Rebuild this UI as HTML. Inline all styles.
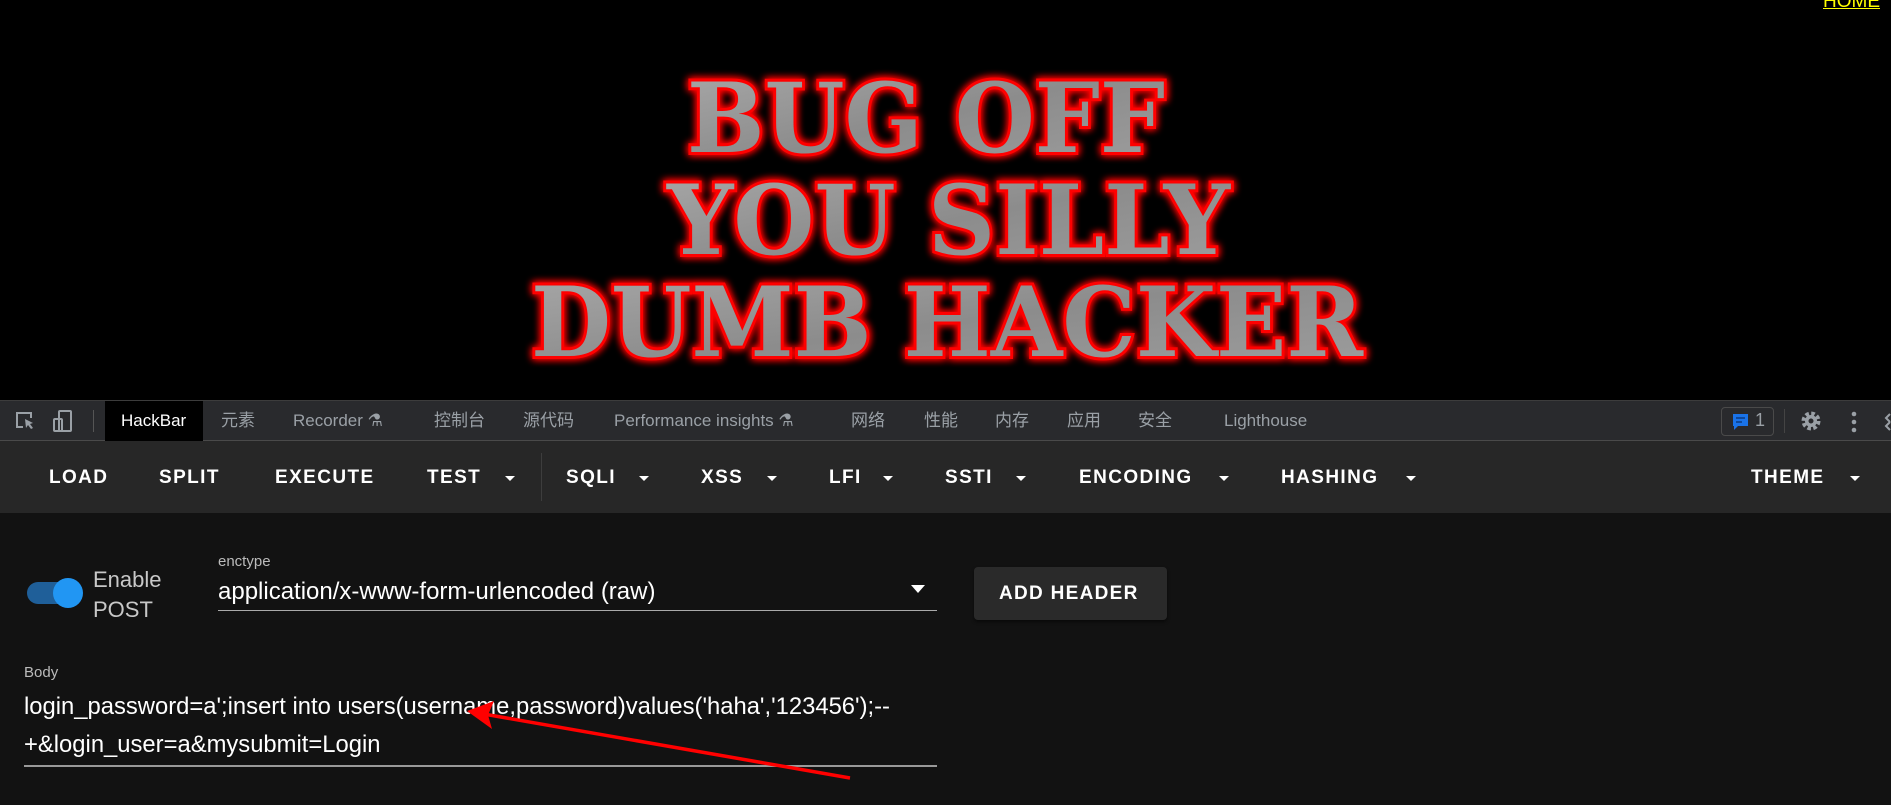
<!DOCTYPE html>
<html><head><meta charset="utf-8">
<style>
*{margin:0;padding:0;box-sizing:border-box}
body{width:1891px;height:805px;background:#000;position:relative;overflow:hidden;font-family:"Liberation Sans","Noto Sans CJK SC",sans-serif}
.abs{position:absolute;white-space:nowrap}
#home{left:1823px;top:-9px;font-size:19px;color:#ff0;text-decoration:underline}
#tabs{position:absolute;left:0;top:400px;width:1891px;height:41px;background:#292a2d;border-top:1px solid #3c3c3c;border-bottom:1px solid #4a4a4a}
#tabs .t{position:absolute;top:10px;font-size:17px;line-height:20px;height:20px;color:#9aa0a6}
#tools{}
#tool{position:absolute;left:0;top:441px;width:1891px;height:72px;background:#272727}
#tool .b{position:absolute;top:26px;font-size:19px;font-weight:bold;color:#fff;letter-spacing:1.4px}
.ar{position:absolute;top:35px;width:0;height:0;border-left:5px solid transparent;border-right:5px solid transparent;border-top:5px solid #fff}
#panel{position:absolute;left:0;top:513px;width:1891px;height:292px;background:#121212}
</style></head><body>
<a id="home" class="abs">HOME</a>
<svg class="abs" style="left:0;top:0" width="1891" height="400">
<defs>
<filter id="g" x="-10%" y="-30%" width="120%" height="160%"><feGaussianBlur stdDeviation="4" in="SourceAlpha" result="b"/><feFlood flood-color="#ff0000"/><feComposite in2="b" operator="in" result="r"/><feMerge><feMergeNode in="r"/><feMergeNode in="r"/><feMergeNode in="SourceGraphic"/></feMerge></filter>
<linearGradient id="m" x1="0" y1="0" x2="1" y2="1"><stop offset="0" stop-color="#a8a8a8"/><stop offset=".5" stop-color="#8c8c8c"/><stop offset="1" stop-color="#9e9e9e"/></linearGradient>
</defs>
<g font-family="DejaVu Serif,serif" font-weight="bold" font-size="96" fill="url(#m)" stroke="#f00" stroke-width="6" paint-order="stroke" filter="url(#g)">
<text x="687" y="152" textLength="478" lengthAdjust="spacingAndGlyphs">BUG OFF</text>
<text x="667" y="254" textLength="563" lengthAdjust="spacingAndGlyphs">YOU SILLY</text>
<text x="531" y="356" textLength="832" lengthAdjust="spacingAndGlyphs">DUMB HACKER</text>
</g>
</svg>
<div id="tabs">
<svg class="abs" style="left:14px;top:9px" width="70" height="24" fill="none" stroke="#9aa0a6" stroke-width="2">
<path d="M9 17H3V3h14v5"/><path d="M11 9l8 4-3 1 3 4-2 1-3-4-2 3z" fill="#9aa0a6" stroke="none"/>
<rect x="45" y="1" width="12" height="20" rx="1"/><rect x="40" y="9" width="8" height="12" rx="1"/>
</svg>
<div class="abs" style="left:93px;top:9px;width:1px;height:22px;background:#555"></div>
<div class="abs" style="left:105px;top:0;width:98px;height:40px;background:#000"></div>
<span class="t" style="left:121px;color:#fff">HackBar</span>
<span class="t" style="left:221px">元素</span>
<span class="t" style="left:293px">Recorder ⚗</span>
<span class="t" style="left:434px">控制台</span>
<span class="t" style="left:523px">源代码</span>
<span class="t" style="left:614px">Performance insights ⚗</span>
<span class="t" style="left:851px">网络</span>
<span class="t" style="left:924px">性能</span>
<span class="t" style="left:995px">内存</span>
<span class="t" style="left:1067px">应用</span>
<span class="t" style="left:1138px">安全</span>
<span class="t" style="left:1224px">Lighthouse</span>
<div class="abs" style="left:1721px;top:6px;width:53px;height:29px;border:1px solid #4a4a4a;border-radius:4px"></div>
<svg class="abs" style="left:1732px;top:12px" width="18" height="18"><path d="M1 1h15v12H6l-4 4V13H1z" fill="#1a73e8"/><path d="M4 5h9M4 9h6" stroke="#0b3a80" stroke-width="1.5"/></svg>
<span class="t" style="left:1755px;top:9px;font-size:18px">1</span>
<div class="abs" style="left:1784px;top:8px;width:1px;height:24px;background:#444"></div>
<svg class="abs" style="left:1800px;top:9px" width="22" height="22"><circle cx="11" cy="11" r="7" fill="none" stroke="#9aa0a6" stroke-width="5" stroke-dasharray="3.3 2.2"/><circle cx="11" cy="11" r="6" fill="#9aa0a6"/><circle cx="11" cy="11" r="2.5" fill="#292a2d"/></svg>
<svg class="abs" style="left:1850px;top:9px" width="10" height="24" fill="#9aa0a6"><circle cx="4" cy="4" r="2.3"/><circle cx="4" cy="12" r="2.3"/><circle cx="4" cy="20" r="2.3"/></svg>
<svg class="abs" style="left:1884px;top:11px" width="7" height="20" fill="none" stroke="#9aa0a6" stroke-width="2"><path d="M6 2l-4 4 4 4M6 10l-4 4 4 4"/></svg>
</div>
<div id="tool">
<span class="b" style="left:49px">LOAD</span>
<span class="b" style="left:159px">SPLIT</span>
<span class="b" style="left:275px">EXECUTE</span>
<span class="b" style="left:427px">TEST</span><i class="ar" style="left:505px"></i>
<div class="abs" style="left:541px;top:12px;width:1px;height:48px;background:#3d3d3d"></div>
<span class="b" style="left:566px">SQLI</span><i class="ar" style="left:639px"></i>
<span class="b" style="left:701px">XSS</span><i class="ar" style="left:767px"></i>
<span class="b" style="left:829px">LFI</span><i class="ar" style="left:883px"></i>
<span class="b" style="left:945px">SSTI</span><i class="ar" style="left:1016px"></i>
<span class="b" style="left:1079px">ENCODING</span><i class="ar" style="left:1219px"></i>
<span class="b" style="left:1281px">HASHING</span><i class="ar" style="left:1406px"></i>
<span class="b" style="left:1751px">THEME</span><i class="ar" style="left:1850px"></i>
</div>
<div id="panel">
<div class="abs" style="left:27px;top:69px;width:46px;height:22px;border-radius:11px;background:#1f5f99"></div>
<div class="abs" style="left:53px;top:65px;width:30px;height:30px;border-radius:50%;background:#2196f3"></div>
<span class="abs" style="left:93px;top:52px;font-size:22px;color:#c8c8c8;line-height:30px">Enable<br>POST</span>
<span class="abs" style="left:218px;top:40px;font-size:15px;color:#bbb">enctype</span>
<span class="abs" style="left:218px;top:65px;font-size:24px;color:#fff">application/x-www-form-urlencoded (raw)</span>
<div class="abs" style="left:911px;top:72px;width:0;height:0;border-left:7px solid transparent;border-right:7px solid transparent;border-top:8px solid #fff"></div>
<div class="abs" style="left:218px;top:97px;width:719px;height:1px;background:#aaa"></div>
<div class="abs" style="left:974px;top:54px;width:193px;height:53px;background:#2a2a2a;border-radius:4px;box-shadow:0 2px 3px rgba(0,0,0,.5)"></div>
<span class="abs" style="left:999px;top:70px;font-size:19px;font-weight:bold;color:#fff;letter-spacing:1.3px">ADD HEADER</span>
<span class="abs" style="left:24px;top:151px;font-size:15px;color:#bbb">Body</span>
<span class="abs" style="left:24px;top:180px;font-size:23.8px;color:#fff">login_password=a';insert into users(username,password)values('haha','123456');--</span>
<span class="abs" style="left:24px;top:218px;font-size:23.8px;color:#fff">+&amp;login_user=a&amp;mysubmit=Login</span>
<div class="abs" style="left:24px;top:252px;width:913px;height:2px;background:#999"></div>
<svg class="abs" style="left:0;top:0" width="1000" height="292"><path d="M850 265L478 200" stroke="#f00" stroke-width="3.5"/><path d="M467 198l27-10-6 14 4 14z" fill="#f00"/></svg>
</div>
</body></html>
